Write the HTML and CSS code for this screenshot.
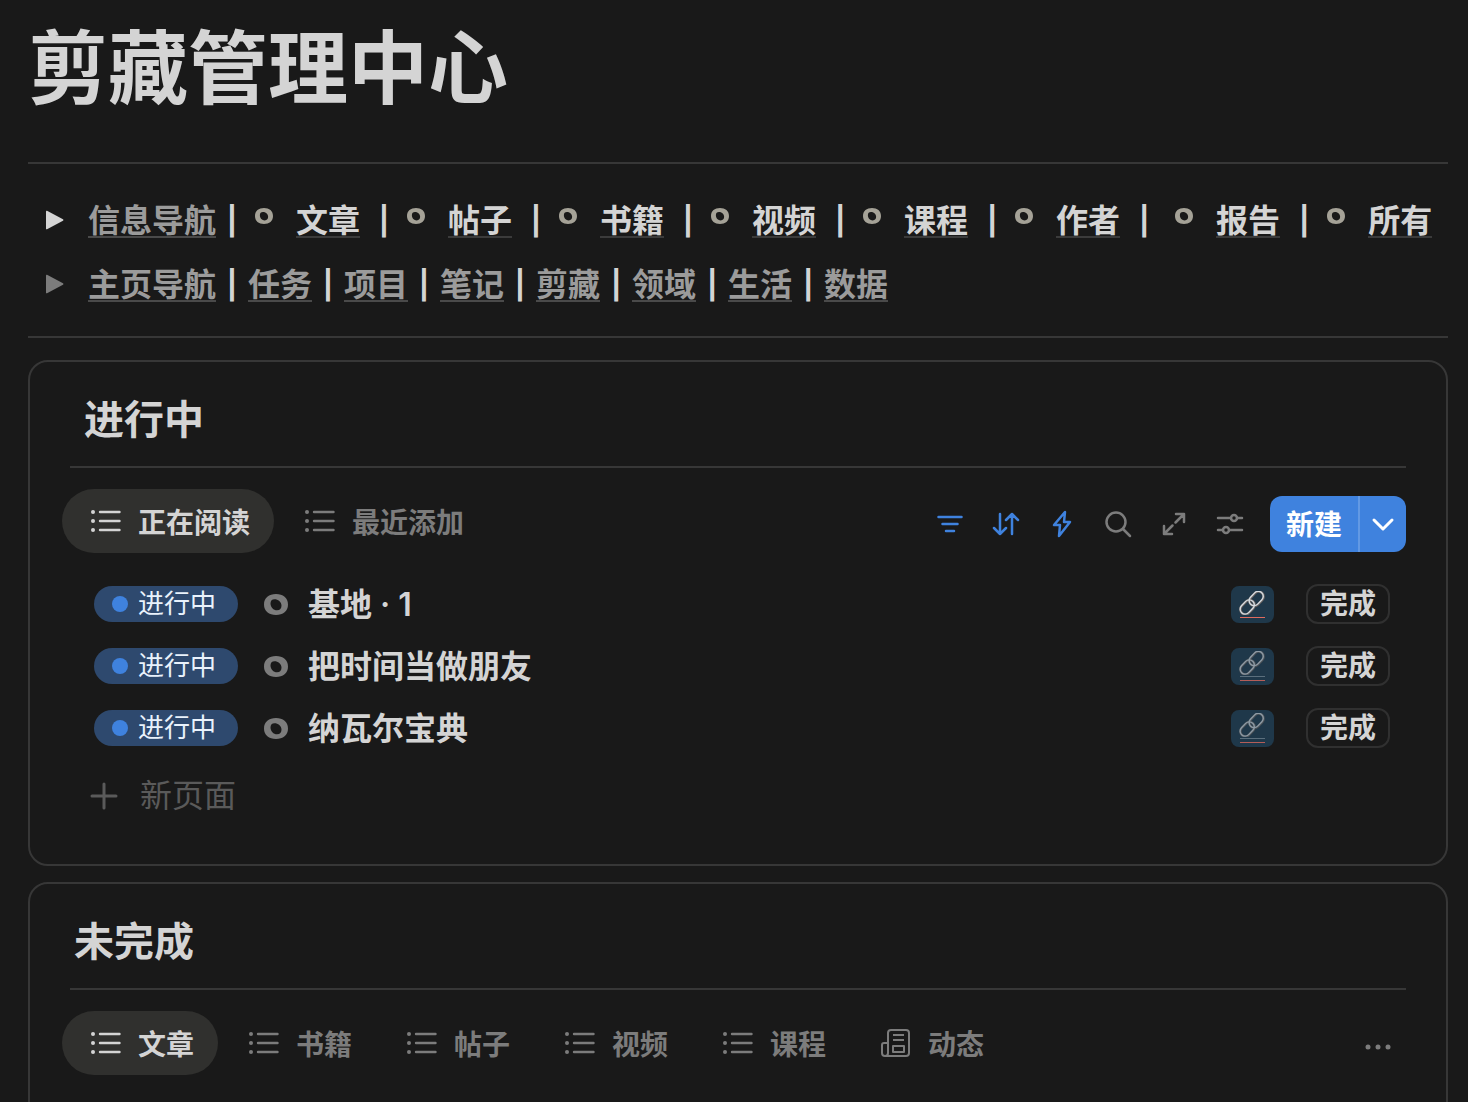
FILE: index.html
```
<!DOCTYPE html>
<html lang="zh-CN">
<head>
    <meta charset="UTF-8">
    <meta name="viewport" content="width=device-width, initial-scale=1.0">
    <title>剪藏管理中心</title>
    <link rel="stylesheet" href="styles.css">
</head>
<body>
    <!-- shared icons -->
    <svg class="sprite" aria-hidden="true">
        <symbol id="icon-ring" viewBox="0 0 24 20" preserveAspectRatio="none">
            <path fill-rule="evenodd" fill="currentColor" d="M12 0C19 0 24 3.500 24 10S19 20 12 20 0 16.500 0 10 5 0 12 0ZM10.500 5C8 5 6.500 6.500 6.500 9 6.500 12.500 9.500 15.500 13 15.500c3 0 4.500-1.800 4.500-4.500C17.500 7.500 14 5 10.500 5Z"/>
        </symbol>
        <symbol id="icon-caret" viewBox="0 0 18 20">
            <path fill="currentColor" d="M1 .8 17 9.200q1 .8 0 1.600L1 19.200q-1 .4-1-.8V1.600Q0 .4 1 .8Z"/>
        </symbol>
        <symbol id="icon-list" viewBox="0 0 32 32">
            <path fill="none" stroke="currentColor" stroke-width="2.400" stroke-linecap="round" d="M10 7h19.500M10 16h19.500M10 25h19.500"/>
            <g fill="currentColor"><circle cx="3" cy="7" r="2"/><circle cx="3" cy="16" r="2"/><circle cx="3" cy="25" r="2"/></g>
        </symbol>
        <symbol id="icon-link" viewBox="0 0 26 24">
            <g fill="none" stroke="#6b6360" stroke-width="2.600">
                <rect x="-8" y="-5" width="16" height="10" rx="5" transform="translate(17.500 7.800) rotate(-46)"/>
                <rect x="-8" y="-5" width="16" height="10" rx="5" transform="translate(8.500 16.200) rotate(-46)"/>
            </g>
            <g fill="none" stroke="#d6dde3" stroke-width="1.400">
                <rect x="-8" y="-5" width="16" height="10" rx="5" transform="translate(17.200 7.500) rotate(-46)"/>
                <rect x="-8" y="-5" width="16" height="10" rx="5" transform="translate(8.200 16) rotate(-46)"/>
            </g>
        </symbol>
    </svg>

    <main class="page">
        <h1 class="page-title">剪藏管理中心</h1>

        <div class="nav">
            <nav class="nav-row" aria-label="信息导航">
                <button class="toggle toggle-light" aria-label="展开信息导航"><svg class="caret"><use href="#icon-caret"/></svg></button>
                <a class="muted" href="#">信息导航</a><span class="bar">|</span>
                <svg class="ring"><use href="#icon-ring"/></svg><a class="item" href="#">文章</a><span class="bar">|</span>
                <svg class="ring"><use href="#icon-ring"/></svg><a class="item" href="#">帖子</a><span class="bar">|</span>
                <svg class="ring"><use href="#icon-ring"/></svg><a class="item" href="#">书籍</a><span class="bar">|</span>
                <svg class="ring"><use href="#icon-ring"/></svg><a class="item" href="#">视频</a><span class="bar">|</span>
                <svg class="ring"><use href="#icon-ring"/></svg><a class="item" href="#">课程</a><span class="bar">|</span>
                <svg class="ring"><use href="#icon-ring"/></svg><a class="item" href="#">作者</a><span class="bar bar-wide">|</span>
                <svg class="ring"><use href="#icon-ring"/></svg><a class="item" href="#">报告</a><span class="bar">|</span>
                <svg class="ring"><use href="#icon-ring"/></svg><a class="item last" href="#">所有</a>
            </nav>
            <nav class="nav-row" aria-label="主页导航">
                <button class="toggle" aria-label="展开主页导航"><svg class="caret"><use href="#icon-caret"/></svg></button>
                <a class="muted" href="#">主页导航</a><span class="bar">|</span>
                <a class="muted" href="#">任务</a><span class="bar">|</span>
                <a class="muted" href="#">项目</a><span class="bar">|</span>
                <a class="muted" href="#">笔记</a><span class="bar">|</span>
                <a class="muted" href="#">剪藏</a><span class="bar">|</span>
                <a class="muted" href="#">领域</a><span class="bar">|</span>
                <a class="muted" href="#">生活</a><span class="bar">|</span>
                <a class="muted" href="#">数据</a>
            </nav>
        </div>

        <section class="card">
            <h2 class="card-title indent">进行中</h2>
            <div class="card-bar">
                <div class="tabs">
                    <button class="tab active"><svg><use href="#icon-list"/></svg>正在阅读</button>
                    <button class="tab"><svg><use href="#icon-list"/></svg>最近添加</button>
                </div>
                <div class="tools">
                    <button class="tool on" aria-label="筛选"><svg viewBox="0 0 32 32"><path d="M4.500 9h23M8.500 16h15M12 23h8"/></svg></button>
                    <button class="tool on" aria-label="排序"><svg viewBox="0 0 32 32"><path d="M10 6v20M4 20l6 6 6-6M22 26V6M16 12l6-6 6 6"/></svg></button>
                    <button class="tool on" aria-label="自动化"><svg viewBox="0 0 32 32"><path d="M19 4 8 17h6l-1 11L24 14h-6Z"/></svg></button>
                    <button class="tool" aria-label="搜索"><svg viewBox="0 0 32 32"><circle cx="14" cy="14" r="9.500"/><path d="m21 21 7 7"/></svg></button>
                    <button class="tool" aria-label="展开"><svg viewBox="0 0 32 32"><path d="M18 6h8v8M26 6l-8.500 8.500M6 18v8h8M6 26l8.500-8.500"/></svg></button>
                    <button class="tool" aria-label="设置"><svg viewBox="0 0 32 32"><path d="M4 10h13M23 10h5M4 22h5M15 22h13"/><circle cx="20" cy="10" r="3"/><circle cx="12" cy="22" r="3"/></svg></button>
                    <div class="new">
                        <button class="new-main">新建</button>
                        <button class="new-more" aria-label="更多模板"><svg viewBox="0 0 24 24"><path d="m3 8 9 9 9-9"/></svg></button>
                    </div>
                </div>
            </div>
            <ul class="list">
                <li class="entry">
                    <span class="status">进行中</span>
                    <svg class="entry-ring"><use href="#icon-ring"/></svg>
                    <span class="entry-title">基地 · 1</span>
                    <a class="chip" href="#" aria-label="链接"><svg><use href="#icon-link"/></svg></a>
                    <button class="done">完成</button>
                </li>
                <li class="entry">
                    <span class="status">进行中</span>
                    <svg class="entry-ring"><use href="#icon-ring"/></svg>
                    <span class="entry-title">把时间当做朋友</span>
                    <a class="chip dim" href="#" aria-label="链接"><svg><use href="#icon-link"/></svg></a>
                    <button class="done">完成</button>
                </li>
                <li class="entry">
                    <span class="status">进行中</span>
                    <svg class="entry-ring"><use href="#icon-ring"/></svg>
                    <span class="entry-title">纳瓦尔宝典</span>
                    <a class="chip dim" href="#" aria-label="链接"><svg><use href="#icon-link"/></svg></a>
                    <button class="done">完成</button>
                </li>
            </ul>
            <button class="add"><svg viewBox="0 0 28 28"><path d="M14 2v24M2 14h24"/></svg>新页面</button>
        </section>

        <section class="card">
            <h2 class="card-title">未完成</h2>
            <div class="card-bar">
                <div class="tabs">
                    <button class="tab active"><svg><use href="#icon-list"/></svg>文章</button>
                    <button class="tab"><svg><use href="#icon-list"/></svg>书籍</button>
                    <button class="tab"><svg><use href="#icon-list"/></svg>帖子</button>
                    <button class="tab"><svg><use href="#icon-list"/></svg>视频</button>
                    <button class="tab"><svg><use href="#icon-list"/></svg>课程</button>
                    <button class="tab">
                        <svg class="news" viewBox="0 0 32 32">
                            <path d="M8 26V6q0-3 3-3h15q3 0 3 3v20q0 3-3 3H5q-3 0-3-3v-8q0-2 2-2h4v10q0 3-3 3"/>
                            <path d="M13 8h11M13 13h11M13 19h11v6H13Z"/>
                        </svg>动态
                    </button>
                </div>
                <button class="more" aria-label="更多"><svg viewBox="0 0 28 8"><circle cx="4" cy="4" r="2.500"/><circle cx="14" cy="4" r="2.500"/><circle cx="24" cy="4" r="2.500"/></svg></button>
            </div>
        </section>
    </main>
</body>
</html>
```
FILE: styles.css
```
* {
    box-sizing: border-box;
}
body {
    margin: 0;
    background-color: #191919;
    color: #d4d4d4;
    font-family: Inter, "Noto Sans CJK SC", sans-serif;
}
button {
    border: none;
    padding: 0;
    background: none;
    color: inherit;
    font: inherit;
    cursor: pointer;
}
svg {
    flex: none;
}
.sprite {
    display: none;
}
.page {
    padding: 16px 20px 0 28px;
}
.page-title {
    margin: 0;
    font-size: 80px;
    line-height: 104px;
    font-weight: 700;
}

/* navigation */
.nav {
    display: flex;
    flex-direction: column;
    gap: 30px;
    margin-top: 42px;
    padding: 40px 0 34px 16px;
    border-top: 2px solid #373737;
    border-bottom: 2px solid #373737;
}
.nav-row {
    display: flex;
    align-items: center;
    white-space: nowrap;
    font-size: 32px;
    line-height: 34px;
    font-weight: 600;
}
.toggle {
    display: flex;
    width: 44px;
    padding: 0 0 2px 2px;
    color: #7c7c7c;
}
.toggle-light {
    color: #d4d4d4;
}
.caret {
    width: 18px;
    height: 20px;
}
.nav-row a {
    color: #d4d4d4;
    text-decoration: none;
    box-shadow: inset 0 -2px #3b3b3b;
}
.nav-row .muted {
    color: #9b9b9b;
    box-shadow: inset 0 -2px #4a4a4a;
}
.nav-row .item {
    margin-right: 8px;
}
.nav-row .last {
    margin-right: 0;
}
.bar {
    width: 32px;
    font-size: 28px;
    font-weight: 700;
    text-align: center;
}
.bar-wide {
    margin-right: 8px;
}
.ring {
    width: 18px;
    height: 16px;
    margin: 0 23px 10px 7px;
    color: #a5a297;
}

/* cards */
.card {
    margin-top: 22px;
    padding: 30px 40px 45px 32px;
    border: 2px solid #373737;
    border-radius: 20px;
}
.card + .card {
    margin-top: 16px;
}
.card-title {
    margin: 0 0 0 8px;
    padding: 0 4px 18px;
    border-bottom: 2px solid #373737;
    font-size: 40px;
    line-height: 56px;
    font-weight: 600;
}
.card-title.indent {
    padding-left: 14px;
}
.card-bar {
    display: flex;
    align-items: center;
    justify-content: space-between;
    margin-top: 21px;
}
.tabs {
    display: flex;
    gap: 2px;
}
.tab {
    display: flex;
    align-items: center;
    gap: 16px;
    height: 64px;
    padding: 0 24px 0 28px;
    border-radius: 32px;
    color: #7c7c7c;
    font-size: 28px;
    font-weight: 600;
}
.tab.active {
    background-color: #30302e;
    color: #d4d4d4;
}
.tab svg {
    width: 32px;
    height: 32px;
}
.news {
    fill: none;
    stroke: currentColor;
    stroke-width: 2;
    stroke-linejoin: round;
}
.tools {
    display: flex;
    align-items: center;
    padding-top: 6px;
}
.tool {
    display: flex;
    justify-content: center;
    width: 56px;
    color: #7c7c7c;
}
.tool svg {
    width: 32px;
    height: 32px;
    fill: none;
    stroke: currentColor;
    stroke-width: 2.500;
    stroke-linecap: round;
    stroke-linejoin: round;
}
.tool.on {
    color: #3f82de;
}
.new {
    display: flex;
    height: 56px;
    margin-left: 12px;
    border-radius: 12px;
    background-color: #3f82de;
    color: white;
}
.new-main {
    padding: 0 16px 2px;
    font-size: 28px;
    font-weight: 600;
}
.new-more {
    display: flex;
    align-items: center;
    justify-content: center;
    width: 48px;
    border-left: 2px solid #6299e4;
}
.new-more svg {
    width: 24px;
    height: 24px;
    fill: none;
    stroke: currentColor;
    stroke-width: 3;
    stroke-linecap: round;
    stroke-linejoin: round;
}

/* entries */
.list {
    margin: 20px 0 0;
    padding: 0 16px 0 32px;
    list-style: none;
}
.entry {
    display: flex;
    align-items: center;
    height: 62px;
}
.status {
    display: flex;
    align-items: center;
    gap: 10px;
    height: 36px;
    padding: 0 22px 0 18px;
    border-radius: 18px;
    background-color: #2e496e;
    color: #e9f2fc;
    font-size: 26px;
    line-height: 32px;
}
.status::before {
    content: "";
    width: 16px;
    height: 16px;
    border-radius: 50%;
    background-color: #3f82de;
}
.entry-ring {
    width: 24px;
    height: 21px;
    margin: 0 20px 0 26px;
    color: #7c7c7c;
}
.entry-title {
    flex: 1;
    padding-bottom: 4px;
    font-size: 32px;
    font-weight: 600;
}
.chip {
    display: flex;
    flex-direction: column;
    align-items: center;
    justify-content: center;
    width: 43px;
    height: 37px;
    margin-right: 32px;
    border-radius: 8px;
    background-color: #1f384a;
}
.chip svg {
    width: 26px;
    height: 24px;
}
.chip::after {
    content: "";
    width: 25px;
    height: 1px;
    margin-top: 2px;
    background-color: #df6b5f;
}
.chip.dim svg {
    opacity: 0.6;
}
.chip.dim::after {
    height: 3px;
    margin-top: 1px;
    border-top: 1px solid #5b6f7d;
    border-bottom: 1px solid #b55d58;
    background: none;
}
.done {
    height: 40px;
    padding: 0 12px;
    border: 2px solid #303030;
    border-radius: 12px;
    font-size: 28px;
    line-height: 36px;
    font-weight: 600;
}
.add {
    display: flex;
    align-items: center;
    gap: 22px;
    margin: 14px 0 0 28px;
    color: #5a5a5a;
    font-size: 32px;
    line-height: 46px;
}
.add svg {
    width: 28px;
    height: 28px;
    stroke: currentColor;
    stroke-width: 3;
    stroke-linecap: round;
}
.more {
    margin-right: 14px;
    padding-top: 4px;
    color: #7c7c7c;
}
.more svg {
    width: 28px;
    height: 8px;
    fill: currentColor;
}
```
